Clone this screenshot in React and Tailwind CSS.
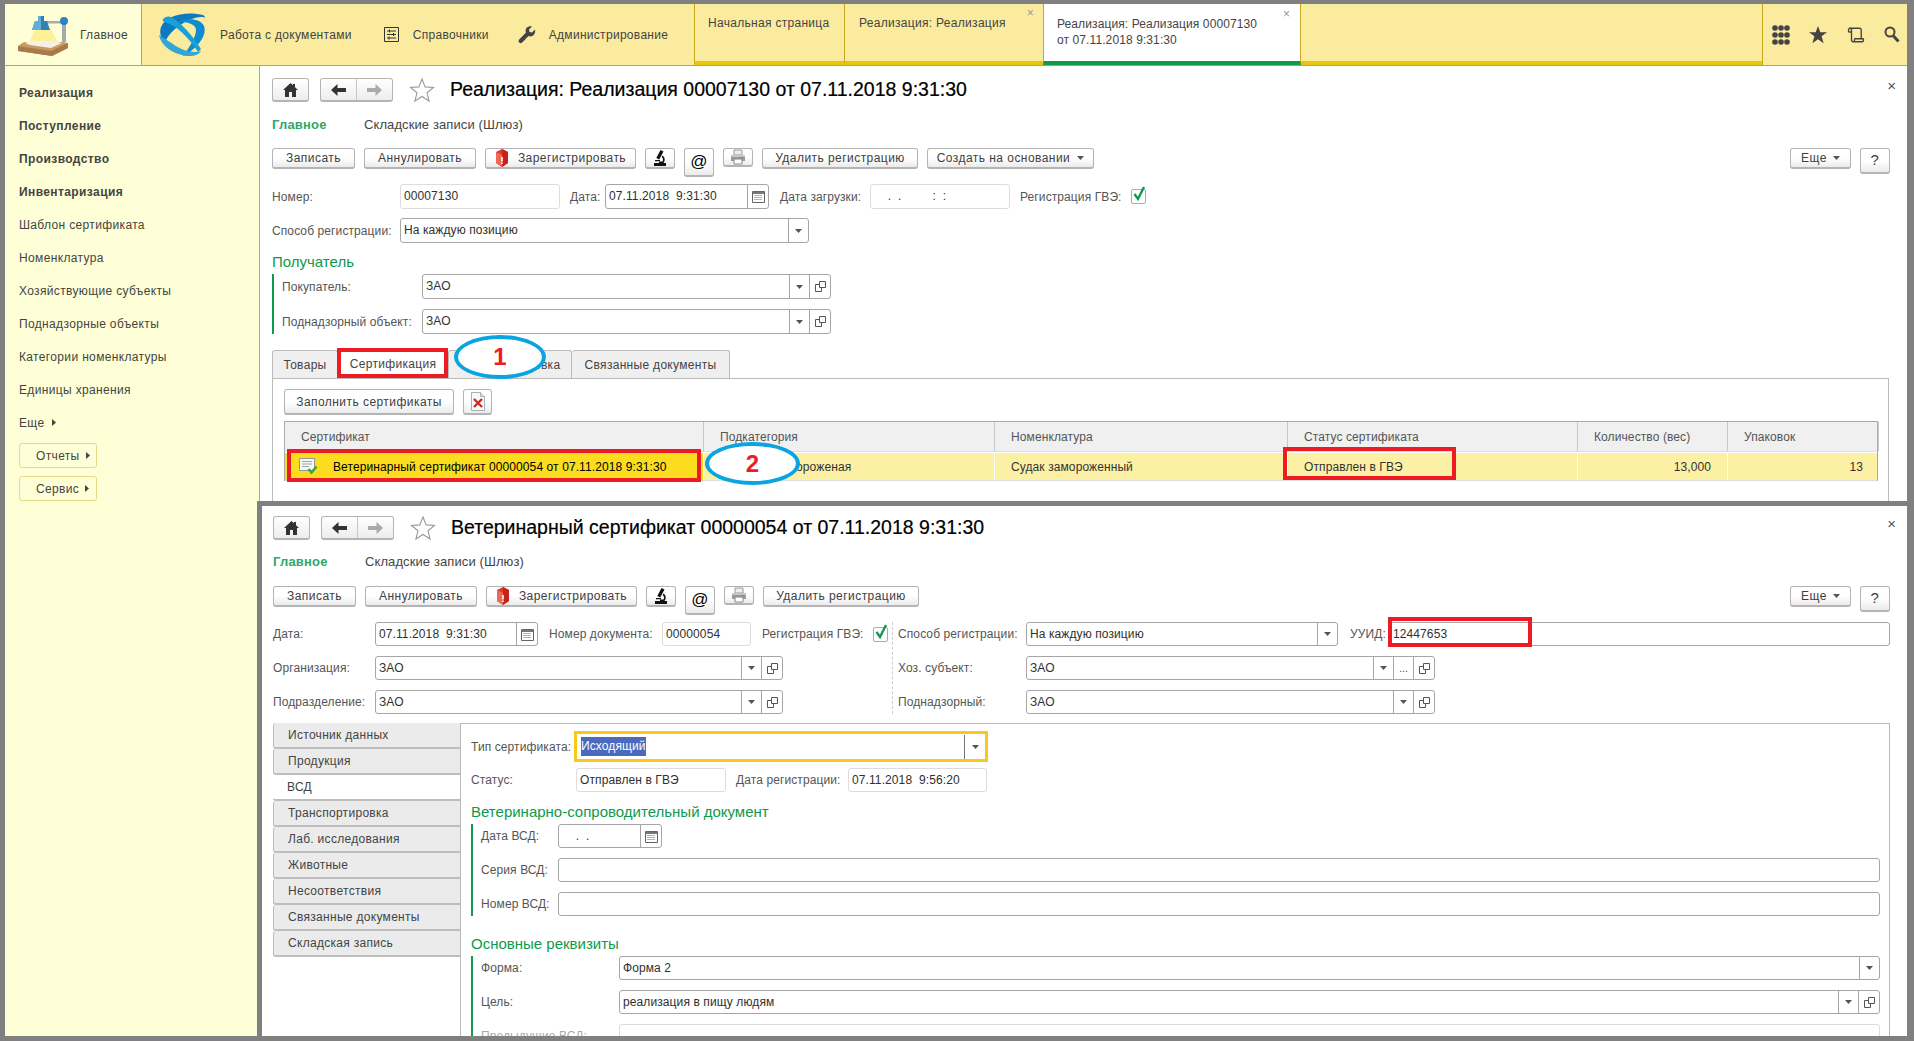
import React from 'react'
import { Scroll } from 'lucide-react'

const Caret = ({ className = '' }) => (
  <svg width="7" height="4" viewBox="0 0 7 4" className={className}><path d="M0 0h7L3.5 4z" fill="#555" /></svg>
)

const CaretRight = () => (
  <svg width="4" height="7" viewBox="0 0 4 7"><path d="M0 0v7l4-3.5z" fill="#444" /></svg>
)

const OpenIcon = () => (
  <svg width="13" height="13" viewBox="0 0 13 13" fill="none" stroke="#555">
    <path d="M5.5 1.5h6v6h-6z" />
    <path d="M5.5 4.5h-4v7h6v-4" />
  </svg>
)

const CalendarIcon = () => (
  <svg width="13" height="13" viewBox="0 0 13 13">
    <path d="M.5 1.5h12v11H.5z" fill="#fff" stroke="#666" />
    <path d="M1 2h11v2H1z" fill="#777" />
    <path d="M2.5 5.5h8M2.5 7.5h8M2.5 9.5h8" stroke="#666" strokeDasharray="1 1" />
  </svg>
)

const HomeIcon = () => (
  <svg width="15" height="14" viewBox="0 0 15 14" fill="#333">
    <path d="M7.5 0 0 7h2v7h4V9h3v5h4V7h2l-3-2.8V1h-2v1.3z" />
  </svg>
)

const ArrowIcon = ({ color, flip }) => (
  <svg width="15" height="12" viewBox="0 0 15 12" fill={color} className={flip ? 'rotate-180' : ''}>
    <path d="M6.5 0v4H15v4H6.5v4L0 6z" />
  </svg>
)

const StarOutline = () => (
  <svg width="26" height="26" viewBox="0 0 26 26" fill="#fff" stroke="#999" strokeWidth="1.1">
    <path d="m13 2 3.1 7.9 8.4.5-6.5 5.4 2.1 8.2-7.1-4.5-7.1 4.5 2.1-8.2-6.5-5.4 8.4-.5z" />
  </svg>
)

const RegisterIcon = () => (
  <svg width="14" height="18" viewBox="0 0 14 18">
    <path d="M7 0 13 3v11l-6 4-6-4V3z" fill="#e03a2c" />
    <path d="M7 0 13 3v11l-6 4z" fill="#c92318" />
    <path d="M1 3 7 6v12l-6-4z" fill="#ee6a58" />
    <path d="M6.2 8h1.6v4.4H6.2zM6.2 13.4h1.6V15H6.2z" fill="#fff" />
  </svg>
)

const MicroscopeIcon = () => (
  <svg width="16" height="18" viewBox="0 0 16 18" fill="#111">
    <path d="m8.5 1 3 1.6-4.3 8L4.3 9z" />
    <path d="M10.5 6.5c2.5 1.500 3 5 1 7.500H7v-1.500h3.500c1-1.500.6-3.500-.8-4.500z" />
    <path d="M2 14h12v3H2zM3 11h5v1.200H3z" />
  </svg>
)

const PrinterIcon = () => (
  <svg width="16" height="16" viewBox="0 0 16 16">
    <path d="M4 1h8v5H4z" fill="#eee" stroke="#999" />
    <path d="M1 6h14v6H1z" fill="#9a9a9a" />
    <path d="M1 6h14v2H1z" fill="#c6c6c6" />
    <path d="M4 10h8v5H4z" fill="#fff" stroke="#888" />
    <path d="M11 8h2v1h-2z" fill="#d55" />
  </svg>
)

const DocDelete = () => (
  <svg width="16" height="19" viewBox="0 0 16 19">
    <path d="M1.500.500h9l4 4v14h-13z" fill="#f6f8fb" stroke="#a6b0bd" />
    <path d="M10.500.500v4h4" fill="#dde4ec" stroke="#a6b0bd" />
    <path d="m4 7 8 8m0-8-8 8" stroke="#cf2a20" strokeWidth="2.400" />
  </svg>
)

const DocCheck = () => (
  <svg width="20" height="17" viewBox="0 0 20 17">
    <path d="M.500.500h15v12h-15z" fill="#f7f7f2" stroke="#8f9aa0" />
    <path d="M3 3.500h10M3 6h10M3 8.500h7" stroke="#9ba6ad" />
    <path d="m9.500 11 3 3.500 5-6" fill="none" stroke="#3fa535" strokeWidth="2.600" />
  </svg>
)

const LampLogo = () => (
  <svg width="54" height="42" viewBox="0 0 54 42">
    <path d="M46 8h4v20h-4z" fill="#a3a9ad" />
    <path d="M22 7h26v2.500H22z" fill="#a9aeb2" />
    <circle cx="48" cy="7" r="4" fill="#2f85b8" />
    <path d="M20 14h14l8 14H13z" fill="#fbee8c" opacity="0.85" />
    <path d="M22 2h6v5h3l3 9H16l3-9h3z" fill="#2d82b6" />
    <path d="M22 2h3v14h-9l3-9h3z" fill="#62aed6" />
    <path d="M8 28 2 32l0 5 34 5 16-8v-5l-6-1z" fill="#c79a66" />
    <path d="M2 32h0l33 5 17-8v5l-16 8-34-5z" fill="#a77a48" />
    <path d="M14 27h24l8 2-11 5-21-3-5-2z" fill="#f5f1e6" />
  </svg>
)

const OrbitLogo = () => (
  <svg width="50" height="44" viewBox="0 0 50 44" fill="none">
    <path d="M4 14C8 4 24-1 40 1c5 .5 8 1 8 4-2-2-10-1-18 3C18 14 9 24 8 30 4 26 2 20 4 14z" fill="#0c79c0" />
    <path d="M20 9C32 4 44 6 47 13c3 8-4 18-13 25-3 3-7 5-8 5 6-8 13-19 13-26 0-5-8-9-19-8z" fill="#0f8ccf" />
    <path d="M2 22c2 11 14 19 28 21 6 .5 12-1 14-5-8 3-20-1-28-7C10 27 5 24 2 22z" fill="#33a6d6" />
    <path d="M6 6c3-3 6-3 8-2 8 4 20 16 30 32l-3 3C33 26 20 13 10 10 7 9 5 8 6 6z" fill="#1aa0d8" />
  </svg>
)

const RefIcon = () => (
  <svg width="15" height="15" viewBox="0 0 15 15" fill="none" stroke="#333">
    <path d="M.500.500h14v14H.500z" />
    <path d="M3 4h9M3 7.500h9M3 11h9" />
    <path d="M5.500 2.500v3M9.500 6v3M5 9.500v3" />
  </svg>
)

const WrenchIcon = () => (
  <svg width="18" height="18" viewBox="0 0 18 18" fill="#444">
    <path d="M17 3.500 14 6.500l-2.500-.5-.5-2.500 3-3c-2.500-.8-5 .2-6 2.300-.6 1.300-.5 2.700 0 3.800L1.200 13.500c-.9 1-.9 2.200 0 3.100s2.100.9 3 0l6.300-6.500c1.200.5 2.600.5 3.800-.1 2.200-1.100 3.300-3.900 2.700-6.500z" />
  </svg>
)

const GridIcon = () => (
  <svg width="18" height="20" viewBox="0 0 18 20" fill="#444">
    {[3, 10, 17].map((y) => [3, 9, 15].map((x) => <circle key={`${x}-${y}`} cx={x} cy={y} r="2.800" />))}
  </svg>
)

const StarSolid = () => (
  <svg width="18" height="18" viewBox="0 0 18 18" fill="#444">
    <path d="m9 0 2.300 6.300H18l-5.400 4 2 7L9 13.200 3.400 17.300l2-7L0 6.300h6.700z" />
  </svg>
)

const SearchIcon = () => (
  <svg width="16" height="17" viewBox="0 0 16 17" fill="none" stroke="#444">
    <circle cx="6" cy="6" r="4.500" strokeWidth="2" />
    <path d="m9.500 10 5 5.500" strokeWidth="3" />
  </svg>
)

const CheckBox = () => (
  <div className="relative h-[15px] w-[15px] rounded-[2px] border border-[#aaa] bg-white">
    <svg width="15" height="17" viewBox="0 0 15 17" className="absolute -top-[5px] left-0">
      <path d="m2.500 9 3.500 5 6-12" fill="none" stroke="#0f9a4c" strokeWidth="2.400" />
    </svg>
  </div>
)

const Btn = ({ className = '', children }) => (
  <div className={`flex h-full items-center justify-center rounded-[3px] border border-b-2 border-[#b4b4b4] bg-linear-to-b from-white via-white to-[#ebebeb] text-[12px] tracking-[0.45px] text-[#404040] ${className}`}>
    {children}
  </div>
)

// поле ввода: parts - кнопки справа
const Field = ({ className = '', value = '', light, parts = [], valueClass = '' }) => (
  <div className={`flex h-full items-stretch rounded-[3px] border bg-white ${light ? 'border-[#dcdcdc]' : 'border-[#a6a6a6]'} ${className}`}>
    <div className={`flex-1 overflow-hidden pl-[3px] text-[12px] leading-[23px] whitespace-pre tracking-[0.1px] text-[#303030] ${valueClass}`}>{value}</div>
    {parts.map((p, i) => (
      <div key={i} className="flex items-center justify-center border-l border-[#a6a6a6]" style={{ width: p === 'open' ? 21 : p === 'dots' ? 20 : p === 'cal' ? 21 : 20 }}>
        {p === 'caret' && <Caret />}
        {p === 'open' && <OpenIcon />}
        {p === 'cal' && <CalendarIcon />}
        {p === 'dots' && <span className="text-[11px] leading-[11px] text-[#555]">...</span>}
      </div>
    ))}
  </div>
)

const Label = ({ className = '', children }) => (
  <div className={`shrink-0 text-[12px] tracking-[0.1px] whitespace-nowrap text-[#555] ${className}`}>{children}</div>
)

const FormHead = ({ title }) => (
  <div className="flex h-[24px] items-center">
    <div className="flex h-full w-[37px] items-center justify-center rounded-[3px] border border-b-2 border-[#b4b4b4] bg-linear-to-b from-white to-[#ededed]"><HomeIcon /></div>
    <div className="ml-[11px] flex h-full w-[73px] items-stretch rounded-[3px] border border-b-2 border-[#b4b4b4] bg-linear-to-b from-white to-[#ededed]">
      <div className="flex flex-1 items-center justify-center border-r border-[#c6c6c6]"><ArrowIcon color="#333" /></div>
      <div className="flex flex-1 items-center justify-center"><ArrowIcon color="#aaa" flip /></div>
    </div>
    <div className="ml-[16px]"><StarOutline /></div>
    <div className="ml-[15px] text-[19.500px] whitespace-nowrap text-black [-webkit-text-stroke:0.2px_black]">{title}</div>
  </div>
)

const FormNav = () => (
  <div className="flex h-[16px] items-center text-[13px] whitespace-nowrap">
    <span className="w-[92px] font-bold tracking-[0.2px] text-[#2fa869]">Главное</span>
    <span className="tracking-[0.1px] text-[#444]">Складские записи (Шлюз)</span>
  </div>
)

const Buttons = ({ create }) => (
  <div className="flex items-stretch gap-[9px]">
    <Btn className="w-[83px]">Записать</Btn>
    <Btn className="w-[112px]">Аннулировать</Btn>
    <Btn className="w-[151px] gap-[9px]"><RegisterIcon />Зарегистрировать</Btn>
    <Btn className="w-[30px]"><MicroscopeIcon /></Btn>
    <Btn className="w-[30px] text-[17px] text-black">@</Btn>
    <Btn className="w-[30px]"><PrinterIcon /></Btn>
    <Btn className="w-[156px]">Удалить регистрацию</Btn>
    {create && <Btn className="w-[167px] gap-[7px]">Создать на основании<Caret /></Btn>}
    <Btn className="ml-auto w-[61px] gap-[6px]">Еще<Caret /></Btn>
    <Btn className="w-[30px] text-[15px] text-[#222]">?</Btn>
  </div>
)

const GroupTitle = ({ children }) => (
  <div className="flex h-[16px] items-center text-[15px] whitespace-nowrap text-[#0d9a4b]">{children}</div>
)

const sidebarBold = ['Реализация', 'Поступление', 'Производство', 'Инвентаризация']
const sidebarItems = ['Шаблон сертификата', 'Номенклатура', 'Хозяйствующие субъекты', 'Поднадзорные объекты', 'Категории номенклатуры', 'Единицы хранения']
const vTabs = ['Источник данных', 'Продукция', 'ВСД', 'Транспортировка', 'Лаб. исследования', 'Животные', 'Несоответствия', 'Связанные документы', 'Складская запись']

const TopBar = () => (
  <div className="flex h-[62px] shrink-0 border-b border-[#c4a91a] bg-[#fbeb9e]">
    <div className="flex w-[137px] shrink-0 items-center border-r border-[#c4a91a] bg-[#ffffd7] pl-[11px] text-[12px] tracking-[0.3px] text-[#444]">
      <LampLogo />
      <span className="ml-[10px]">Главное</span>
    </div>
    <div className="flex w-[552px] shrink-0 items-center text-[12px] tracking-[0.3px] text-[#444]">
      <div className="ml-[15px]"><OrbitLogo /></div>
      <span className="ml-[13px]">Работа с документами</span>
      <div className="ml-[32px]"><RefIcon /></div>
      <span className="ml-[14px]">Справочники</span>
      <div className="ml-[29px]"><WrenchIcon /></div>
      <span className="ml-[13px]">Администрирование</span>
    </div>
    <div className="relative w-[151px] shrink-0 border-x border-[#c4a91a] border-b-4 border-b-[#e8c60e] pl-[13px] pt-[12px] text-[12px] leading-[14px] tracking-[0.3px] text-[#444]">Начальная страница</div>
    <div className="relative w-[198px] shrink-0 border-b-4 border-[#e8c60e] pl-[14px] pt-[12px] text-[12px] leading-[14px] tracking-[0.3px] text-[#444]">
      Реализация: Реализация
      <span className="absolute top-[2px] right-[9px] text-[12px] text-[#999]">×</span>
    </div>
    <div className="relative w-[258px] shrink-0 border-x border-b-4 border-[#c4a91a] border-b-[#0d9a4b] bg-white pl-[13px] pt-[12px] text-[12px] leading-[16px] tracking-[0.1px] text-[#444]">
      Реализация: Реализация 00007130<br />от 07.11.2018 9:31:30
      <span className="absolute top-[2px] right-[10px] text-[12px] text-[#999]">×</span>
    </div>
    <div className="flex-1 border-b-4 border-[#e8c60e]" />
    <div className="flex w-[145px] shrink-0 items-center justify-between border-l border-[#c4a91a] pr-[7px] pl-[9px]">
      <GridIcon />
      <StarSolid />
      <Scroll size={18} color="#444" strokeWidth={1.800} />
      <SearchIcon />
    </div>
  </div>
)

const Sidebar = () => (
  <div className="w-[255px] shrink-0 border-r border-[#a8a8a0] bg-[#ffffd7] pt-[10px] pl-[14px] text-[12px] tracking-[0.35px] text-[#444]">
    {sidebarBold.map((t) => <div key={t} className="flex h-[33px] items-center font-bold tracking-[0.4px]">{t}</div>)}
    {sidebarItems.map((t) => <div key={t} className="flex h-[33px] items-center">{t}</div>)}
    <div className="flex h-[33px] items-center gap-[8px]">Еще <CaretRight /></div>
    <div className="mt-[4px] flex h-[25px] w-[78px] items-center gap-[6px] rounded-[3px] border border-[#e8d98a] pl-[16px]">Отчеты <CaretRight /></div>
    <div className="mt-[8px] flex h-[25px] w-[78px] items-center gap-[6px] rounded-[3px] border border-[#e8d98a] pl-[16px]">Сервис <CaretRight /></div>
  </div>
)

const cols = 'grid grid-cols-[419px_291px_293px_290px_150px_151px]'

const CertTable = () => (
  <div className="mt-[6px] border-x border-t border-[#aaa] text-[12px] tracking-[0.1px]">
    <div className={`${cols} h-[30px] border-b border-[#ddd] bg-[#f0f0f0] text-[#555]`}>
      {['Сертификат', 'Подкатегория', 'Номенклатура', 'Статус сертификата', 'Количество (вес)', 'Упаковок'].map((t) => (
        <div key={t} className="flex items-center border-r border-[#c8c8c8] pl-[16px]">{t}</div>
      ))}
    </div>
    <div className={`${cols} mt-px h-[28px] border-b border-[#ddd] bg-[#fcf0a5] text-[#333]`}>
      <div className="flex items-center gap-[14px] border-r border-white bg-[#fbdc1e] pl-[14px] text-black">
        <DocCheck />
        Ветеринарный сертификат 00000054 от 07.11.2018 9:31:30
      </div>
      <div className="flex items-center border-r border-white pl-[16px]">Рыба свежемороженая</div>
      <div className="flex items-center border-r border-white pl-[16px]">Судак замороженный</div>
      <div className="flex items-center border-r border-white pl-[16px]">Отправлен в ГВЭ</div>
      <div className="flex items-center justify-end border-r border-white pr-[16px]">13,000</div>
      <div className="flex items-center justify-end pr-[16px]">13</div>
    </div>
  </div>
)

const Realization = () => (
  <div className="pt-[12px] pr-[17px] pl-[12px]">
    <FormHead title="Реализация: Реализация 00007130 от 07.11.2018 9:31:30" />
    <div className="mt-[15px]"><FormNav /></div>
    <div className="mt-[15px] h-[26px]"><Buttons create /></div>
    <div className="mt-[10px] flex h-[25px] items-center">
      <Label className="w-[128px]">Номер:</Label>
      <Field className="w-[160px]" light value="00007130" />
      <Label className="ml-[10px] w-[35px]">Дата:</Label>
      <Field className="w-[164px]" value="07.11.2018  9:31:30" parts={['cal']} />
      <Label className="ml-[11px] w-[90px]">Дата загрузки:</Label>
      <Field className="w-[140px]" light value="    .  .         :  :" />
      <Label className="ml-[10px] w-[111px]">Регистрация ГВЭ:</Label>
      <CheckBox />
    </div>
    <div className="mt-[9px] flex h-[25px] items-center">
      <Label className="w-[128px]">Способ регистрации:</Label>
      <Field className="w-[409px]" value="На каждую позицию" parts={['caret']} />
    </div>
    <div className="mt-[11px]"><GroupTitle>Получатель</GroupTitle></div>
    <div className="mt-[4px] flex flex-col gap-[10px] border-l-2 border-[#0d9a4b] pl-[8px]">
      <div className="flex h-[25px] items-center">
        <Label className="w-[140px]">Покупатель:</Label>
        <Field className="w-[409px]" value="ЗАО" parts={['caret', 'open']} />
      </div>
      <div className="flex h-[25px] items-center">
        <Label className="w-[140px]">Поднадзорный объект:</Label>
        <Field className="w-[409px]" value="ЗАО" parts={['caret', 'open']} />
      </div>
    </div>
    <div className="mt-[16px] flex h-[28px] items-stretch text-[12px] tracking-[0.3px] text-[#444]">
      <div className="flex w-[66px] items-center justify-center rounded-t-[3px] border border-b-0 border-[#bbb] bg-[#efefef]">Товары</div>
      <div className="flex w-[110px] items-center justify-center bg-white">Сертификация</div>
      <div className="flex w-[124px] items-center justify-center rounded-t-[3px] border border-b-0 border-[#bbb] bg-[#efefef]">Транспортировка</div>
      <div className="flex w-[158px] items-center justify-center rounded-t-[3px] border border-b-0 border-l-0 border-[#bbb] bg-[#efefef]">Связанные документы</div>
    </div>
    <div className="mr-px h-[200px] border-x border-t border-[#bbb] pt-[10px] pr-[10px] pl-[11px]">
      <div className="flex h-[26px] gap-[9px]">
        <Btn className="w-[170px]">Заполнить сертификаты</Btn>
        <Btn className="w-[29px]"><DocDelete /></Btn>
      </div>
      <CertTable />
    </div>
  </div>
)

const Certificate = () => (
  <div className="absolute inset-y-0 right-0 -left-[3px] z-10 overflow-hidden border-t-[5px] border-l-[5px] border-[#808080] bg-white pt-[10px] pr-[17px] pl-[11px]" style={{ top: 435 }}>
    <FormHead title="Ветеринарный сертификат 00000054 от 07.11.2018 9:31:30" />
    <div className="mt-[14px]"><FormNav /></div>
    <div className="mt-[16px] h-[25px]"><Buttons /></div>
    <div className="mt-[11px] flex">
      <div className="flex w-[619px] shrink-0 flex-col gap-[10px]">
        <div className="flex h-[24px] items-center">
          <Label className="w-[102px]">Дата:</Label>
          <Field className="w-[163px]" value="07.11.2018  9:31:30" parts={['cal']} />
          <Label className="ml-[11px] w-[113px]">Номер документа:</Label>
          <Field className="w-[89px]" light value="00000054" />
          <Label className="ml-[11px] w-[111px]">Регистрация ГВЭ:</Label>
          <CheckBox />
        </div>
        <div className="flex h-[24px] items-center">
          <Label className="w-[102px]">Организация:</Label>
          <Field className="w-[408px]" value="ЗАО" parts={['caret', 'open']} />
        </div>
        <div className="flex h-[24px] items-center">
          <Label className="w-[102px]">Подразделение:</Label>
          <Field className="w-[408px]" value="ЗАО" parts={['caret', 'open']} />
        </div>
      </div>
      <div className="flex flex-1 flex-col gap-[10px] border-l border-dashed border-[#ccc] pl-[5px]">
        <div className="flex h-[24px] items-center">
          <Label className="w-[128px]">Способ регистрации:</Label>
          <Field className="w-[312px]" value="На каждую позицию" parts={['caret']} />
          <Label className="ml-[12px] w-[39px]">УУИД:</Label>
          <Field className="w-[501px]" value="12447653" />
        </div>
        <div className="flex h-[24px] items-center">
          <Label className="w-[128px]">Хоз. субъект:</Label>
          <Field className="w-[409px]" value="ЗАО" parts={['caret', 'dots', 'open']} />
        </div>
        <div className="flex h-[24px] items-center">
          <Label className="w-[128px]">Поднадзорный:</Label>
          <Field className="w-[409px]" value="ЗАО" parts={['caret', 'open']} />
        </div>
      </div>
    </div>
    <div className="mt-[9px] flex h-[320px] text-[12px]">
      <div className="w-[187px] shrink-0 tracking-[0.3px] text-[#444]">
        {vTabs.map((t) => (
          <div key={t} className={`flex h-[26px] items-center rounded-l-[3px] border-b-2 border-[#bdbdbd] pl-[14px] ${t === 'ВСД' ? 'bg-white' : 'border-l bg-[#ebebeb]'}`}>{t}</div>
        ))}
      </div>
      <div className="flex-1 border-x border-t border-[#bbb] pt-[7px] pl-[10px]">
        <div className="flex h-[31px] items-center">
          <Label className="w-[103px]">Тип сертификата:</Label>
          <div className="flex h-full w-[414px] items-center border-[3px] border-[#f8c81c] pl-[4px]">
            <span className="bg-[#4b69bd] text-[12px] leading-[19px] tracking-[0.1px] text-white">Исходящий</span>
            <div className="ml-auto flex h-[24px] w-[21px] items-center justify-center border-l border-[#777]"><Caret /></div>
          </div>
        </div>
        <div className="mt-[6px] flex h-[24px] items-center">
          <Label className="w-[105px]">Статус:</Label>
          <Field className="w-[150px]" light value="Отправлен в ГВЭ" />
          <Label className="ml-[10px] w-[112px]">Дата регистрации:</Label>
          <Field className="w-[139px]" light value="07.11.2018  9:56:20" />
        </div>
        <div className="mt-[12px]"><GroupTitle>Ветеринарно-сопроводительный документ</GroupTitle></div>
        <div className="mt-[4px] flex flex-col gap-[10px] border-l-2 border-[#0d9a4b] pl-[8px]">
          <div className="flex h-[24px] items-center">
            <Label className="w-[77px]">Дата ВСД:</Label>
            <Field className="w-[104px]" value="    .  ." parts={['cal']} />
          </div>
          <div className="flex h-[24px] items-center">
            <Label className="w-[77px]">Серия ВСД:</Label>
            <Field className="w-[1322px]" />
          </div>
          <div className="flex h-[24px] items-center">
            <Label className="w-[77px]">Номер ВСД:</Label>
            <Field className="w-[1322px]" />
          </div>
        </div>
        <div className="mt-[20px]"><GroupTitle>Основные реквизиты</GroupTitle></div>
        <div className="mt-[4px] flex flex-col gap-[10px] border-l-2 border-[#0d9a4b] pl-[8px]">
          <div className="flex h-[24px] items-center">
            <Label className="w-[138px]">Форма:</Label>
            <Field className="w-[1261px]" value="Форма 2" parts={['caret']} />
          </div>
          <div className="flex h-[24px] items-center">
            <Label className="w-[138px]">Цель:</Label>
            <Field className="w-[1261px]" value="реализация в пищу людям" parts={['caret', 'open']} />
          </div>
          <div className="flex h-[24px] items-center">
            <Label className="w-[138px] text-[#aaa]">Предыдущие ВСД:</Label>
            <Field className="w-[1261px]" light />
          </div>
        </div>
      </div>
    </div>
  </div>
)

const Ellipse = ({ className = '', children }) => (
  <div className={`absolute z-20 flex items-center justify-center rounded-[50%] border-4 border-[#0aa5e0] bg-white text-[24px] leading-none font-bold text-[#ed1c24] ${className}`}>
    {children}
  </div>
)

const RedBox = ({ className = '' }) => (
  <div className={`absolute z-20 border-4 border-[#ed1c24] ${className}`} />
)

export default function App() {
  return (
    <div className="h-[1041px] w-[1914px] overflow-hidden bg-[#808080] pt-[4px] pr-[7px] pb-[5px] pl-[5px] [font-family:'Liberation_Sans',sans-serif]">
      <div className="flex h-full flex-col bg-white">
        <TopBar />
        <div className="flex min-h-0 flex-1">
          <Sidebar />
          <div className="relative min-w-0 flex-1">
            <Realization />
            <Certificate />
            <span className="absolute top-[12px] right-[11px] text-[15px] leading-[15px] text-[#555]">×</span>
            <span className="absolute top-[450px] right-[11px] z-20 text-[15px] leading-[15px] text-[#555]">×</span>
            <RedBox className="top-[282px] left-[77px] h-[30px] w-[111px]" />
            <RedBox className="top-[383px] left-[27px] h-[33px] w-[414px]" />
            <RedBox className="top-[381px] left-[1023px] h-[33px] w-[173px]" />
            <RedBox className="top-[551px] left-[1128px] h-[30px] w-[144px]" />
            <Ellipse className="top-[269px] left-[194px] h-[44px] w-[92px]">1</Ellipse>
            <Ellipse className="top-[376px] left-[445px] h-[43px] w-[95px]">2</Ellipse>
          </div>
        </div>
      </div>
    </div>
  )
}
